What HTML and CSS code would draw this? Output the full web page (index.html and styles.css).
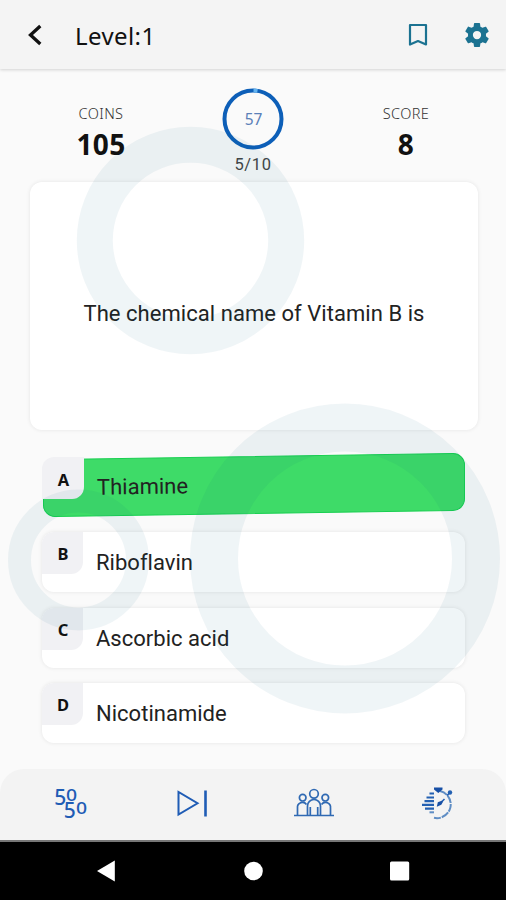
FILE: index.html
```html
<!DOCTYPE html>
<html lang="en">
<head>
<meta charset="utf-8">
<title>Level:1</title>
<link rel="stylesheet" href="styles.css">
</head>
<body>
<div class="screen">
  <header class="topbar">
    <svg class="back" width="18" height="24" viewBox="0 0 18 24"><path d="M14.300 3 4.500 12l9.800 9" fill="none" stroke="#111" stroke-width="3.300"/></svg>
    <h1 class="title">Level:1</h1>
    <svg class="bookmark" width="20" height="24" viewBox="0 0 20 24"><path d="M2 2h16v19.500l-8-3.500-8 3.500z" fill="none" stroke="#1b7291" stroke-width="2.200" stroke-linejoin="round"/></svg>
    <svg class="gear" width="30" height="30" viewBox="0 0 24 24"><path fill="#1b7291" d="M19.140 12.940c.040-.300.060-.610.060-.940 0-.320-.020-.640-.070-.940l2.030-1.580c.180-.140.230-.410.120-.610l-1.920-3.320c-.120-.220-.370-.290-.590-.220l-2.390.960c-.500-.380-1.030-.700-1.620-.940l-.360-2.540c-.040-.240-.240-.410-.480-.410h-3.840c-.240 0-.430.170-.470.410l-.360 2.540c-.590.240-1.130.570-1.620.940l-2.390-.960c-.220-.080-.470 0-.590.220L2.740 8.870c-.120.210-.080.470.120.610l2.030 1.580c-.050.300-.090.630-.090.940s.020.640.070.940l-2.030 1.580c-.180.140-.230.410-.120.610l1.920 3.320c.120.220.370.290.590.220l2.390-.960c.500.380 1.030.700 1.620.940l.360 2.540c.050.240.240.410.480.410h3.840c.240 0 .440-.170.470-.410l.360-2.540c.590-.240 1.130-.560 1.620-.940l2.390.960c.220.080.470 0 .590-.220l1.920-3.320c.120-.220.070-.470-.120-.610l-2.010-1.580zM12 15.300a3.300 3.300 0 1 1 0-6.600 3.300 3.300 0 0 1 0 6.600z"/></svg>
  </header>

  <section class="stats">
    <div class="stat"><span class="label">COINS</span><span class="value">105</span></div>
    <div class="timer">
      <div class="dial">
        <svg width="62" height="62" viewBox="0 0 62 62"><circle cx="31" cy="31" r="28.500" fill="none" stroke="#0d5fb8" stroke-width="4"/><path d="M31.500 2.500a28.500 28.500 0 0 1 4 .35" fill="none" stroke="#63b3f0" stroke-width="3.800"/></svg>
        <span class="seconds">57</span>
      </div>
      <span class="progress">5/10</span>
    </div>
    <div class="stat"><span class="label">SCORE</span><span class="value">8</span></div>
  </section>

  <main class="quiz">
    <div class="question"><p>The chemical name of Vitamin B is</p></div>
    <div class="answers">
      <div class="answer correct"><b class="letter">A</b><span class="text">Thiamine</span></div>
      <div class="answer"><b class="letter">B</b><span class="text">Riboflavin</span></div>
      <div class="answer"><b class="letter">C</b><span class="text">Ascorbic acid</span></div>
      <div class="answer"><b class="letter">D</b><span class="text">Nicotinamide</span></div>
    </div>
  </main>

  <footer class="lifelines">
    <div class="lifeline"><div class="fifty"><div>5<span class="zero">0</span></div><div>5<span class="zero">0</span></div></div></div>
    <div class="lifeline"><svg width="32" height="28" viewBox="0 0 32 28"><path d="M2.500 3v22.500L21.500 14.250z" fill="none" stroke="#1f5cb5" stroke-width="2"/><path d="M29.500 1.500v26" stroke="#1f5cb5" stroke-width="2.600"/></svg></div>
    <div class="lifeline"><svg width="42" height="30" viewBox="0 0 42 30"><g fill="none" stroke="#2f69b3" stroke-width="1.700"><circle cx="21" cy="5.800" r="4.300"/><circle cx="9.700" cy="9.700" r="3.300"/><circle cx="32.300" cy="9.700" r="3.300"/><path d="M14.500 27v-9a6.500 6.500 0 0 1 13 0v9M4.500 27v-7a5 5 0 0 1 9-3.500M37.500 27v-7a5 5 0 0 0-9-3.500M17.300 27v-8M24.700 27v-8M1 27.500h40"/></g></svg></div>
    <div class="lifeline"><svg width="34" height="34" viewBox="0 0 34 34"><g fill="none" stroke="#2360b2"><path d="M20 5a13.300 13.300 0 1 1-6 26.800" stroke="#5f8dc4" stroke-width="2" stroke-dasharray="8 1"/><path d="M9.500 7.500h4.500M6.500 11.500h7.500M4.500 15.200h9.500M2 18.900h12M5 22.600h9" stroke-width="2.200"/><path d="M9.500 26.300h4.500" stroke-width="2" stroke="#5f8dc4"/></g><path d="M14 1.500h8.500v2l-4.200 3.500L14 3.500z" fill="#174fa5"/><circle cx="30" cy="6.500" r="2.200" fill="#2360b2"/><path d="M27 9.500l3-3M24.500 13l-5 5" stroke="#2360b2" stroke-width="1.600"/><path d="M16.800 20.800l1-4.500 4-1.500 1.200 1-1.700 3z" fill="#174fa5"/></svg></div>
  </footer>

  <nav class="sysnav">
    <svg width="20" height="24" viewBox="0 0 20 24"><path d="M18.800 1.500v21L1 12z" fill="#fff"/></svg>
    <svg width="20" height="24" viewBox="0 0 20 24"><circle cx="10.500" cy="12" r="9.300" fill="#fff"/></svg>
    <svg width="20" height="24" viewBox="0 0 20 24"><rect x="0" y="2.600" width="19.200" height="19" rx="1.500" fill="#fff"/></svg>
  </nav>

  <svg class="rings" width="506" height="900" viewBox="0 0 506 900"><g fill="none" stroke="#006482" stroke-opacity=".063"><circle cx="190.500" cy="240.500" r="95.700" stroke-width="36"/><circle cx="345" cy="558.500" r="131" stroke-width="48"/><circle cx="78.500" cy="560" r="59" stroke-width="23"/></g></svg>
</div>
</body>
</html>
```
FILE: styles.css
```css
* { box-sizing: border-box; }
body { margin: 0; }
.screen {
  position: relative;
  display: flex;
  flex-direction: column;
  width: 506px;
  height: 900px;
  overflow: hidden;
  background: #fafafa;
  color: #111;
  font-family: "Noto Sans", sans-serif;
}
.topbar {
  display: flex;
  align-items: center;
  flex: none;
  height: 69px;
  padding: 0 14px 0 26px;
  background: #f4f4f4;
  box-shadow: 0 1px 3px rgba(0, 0, 0, .16);
}
.title { margin: 2px auto 0 31px; font-size: 24px; line-height: 32px; font-weight: 400; letter-spacing: .4px; }
.bookmark { margin-right: 34px; }
.stats { display: flex; justify-content: space-between; flex: none; height: 113px; padding: 19px 50px 0; }
.stat { display: flex; flex-direction: column; align-items: center; width: 101px; padding: 15px 0 0 1px; }
.label { font: 300 14.500px/20px "Noto Sans", sans-serif; letter-spacing: .4px; color: #333; }
.value { margin-top: 1px; font-size: 28px; font-weight: 700; line-height: 40px; letter-spacing: .4px; }
.timer { display: flex; flex-direction: column; align-items: center; }
.dial { display: grid; width: 62px; height: 62px; place-items: center; }
.dial > * { grid-area: 1 / 1; }
.seconds { padding-left: 1px; color: #5b80b8; font-size: 15.500px; }
.progress { font: 16.500px/24px Roboto, sans-serif; letter-spacing: .6px; color: #444; margin-top: 3px; }
.quiz { display: flex; flex-direction: column; flex: 1; gap: 27px; }
.question {
  display: flex;
  align-items: center;
  justify-content: center;
  height: 248px;
  margin: 0 28px 0 30px;
  padding-top: 16px;
  border-radius: 12px;
  background: #fff;
  box-shadow: 0 0 4px rgba(0, 0, 0, .09);
}
.question p { margin: 0; font: 22px/30px Roboto, sans-serif; letter-spacing: .05px; white-space: nowrap; color: #222; }
.answers { display: flex; flex-direction: column; gap: 15.300px; margin: 0 41px 0 42px; }
.answer {
  position: relative;
  display: flex;
  height: 60px;
  border-radius: 12px;
  background: #fff;
  box-shadow: 0 0 4px rgba(0, 0, 0, .09);
}
.letter {
  position: relative;
  width: 41px;
  height: 42px;
  padding-left: 1px;
  border-radius: 12px 0 12px 0;
  background: #f1f1f4;
  font-size: 16.500px;
  font-weight: 700;
  line-height: 44px;
  text-align: center;
}
.text { position: relative; margin-left: 13px; font: 22px/62px Roboto, sans-serif; letter-spacing: .02px; color: #222; }
.correct { background: none; box-shadow: none; }
.correct .letter { width: 42px; line-height: 45px; }
.correct::before {
  position: absolute;
  inset: -1px 0 3px 1px;
  border: 1px solid #18cf50;
  border-radius: 12px;
  background: #3edb68;
  content: "";
  transform: skewY(-.85deg);
}
.correct .text { line-height: 60px; letter-spacing: 0; transform: rotate(-.85deg); }
.lifelines { display: grid; grid-template-columns: repeat(4, 1fr); flex: none; height: 71px; padding: 0 8px 3px; border-radius: 24px 24px 0 0; background: #f3f3f3; }
.lifeline { display: flex; align-items: center; justify-content: center; }
.fifty { width: 32px; margin-left: 2px; font-size: 21px; font-weight: 500; color: #1f5cb5; }
.fifty div { display: flex; align-items: flex-start; height: 13.500px; line-height: 15px; }
.fifty div + div { padding-left: 9.500px; }
.fifty .zero { font-size: 15.500px; line-height: 11px; transform: scaleX(1.25); transform-origin: left; }
.sysnav { display: flex; justify-content: space-between; align-items: center; flex: none; height: 60px; padding: 0 96px; border-top: 2px solid #777; background: #000; }
.rings { position: absolute; inset: 0; pointer-events: none; }
```
